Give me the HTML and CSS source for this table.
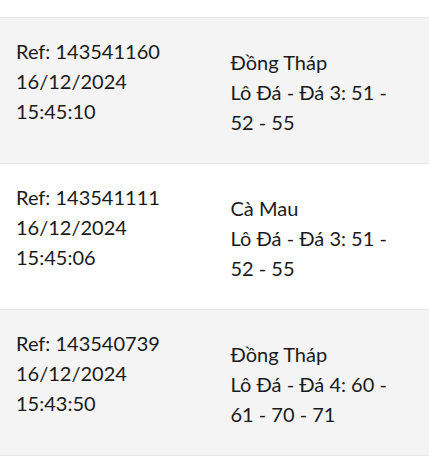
FILE: index.html
```html
<!DOCTYPE html>
<html lang="vi">
<head>
<meta charset="utf-8">
<link rel="stylesheet" href="styles.css">
</head>
<body>
<div class="list">
  <div class="row">
    <div class="col col-left">
      <div>Ref: 143541160</div>
      <div>16/12/2024</div>
      <div>15:45:10</div>
    </div>
    <div class="col col-right">
      <div>Đồng Tháp</div>
      <div>Lô Đá - Đá 3: 51 - 52 - 55</div>
    </div>
  </div>
  <div class="row">
    <div class="col col-left">
      <div>Ref: 143541111</div>
      <div>16/12/2024</div>
      <div>15:45:06</div>
    </div>
    <div class="col col-right">
      <div>Cà Mau</div>
      <div>Lô Đá - Đá 3: 51 - 52 - 55</div>
    </div>
  </div>
  <div class="row">
    <div class="col col-left">
      <div>Ref: 143540739</div>
      <div>16/12/2024</div>
      <div>15:43:50</div>
    </div>
    <div class="col col-right">
      <div>Đồng Tháp</div>
      <div>Lô Đá - Đá 4: 60 - 61 - 70 - 71</div>
    </div>
  </div>
</div>
</body>
</html>
```
FILE: styles.css
```css
html, body {
  margin: 0;
  padding: 0;
  background: #ffffff;
}
body {
  font-family: Lato, "Noto Sans", sans-serif;
  font-size: 20px;
  line-height: 30px;
  color: #1a1a1a;
}
.list {
  padding-top: 17px;
}
.row {
  display: grid;
  grid-template-columns: 1fr 1fr;
  padding: 18px 16px 26px;
  border-top: 1px solid #e6e6e6;
  height: 101px;
}
.row:nth-child(odd) {
  background: #f4f4f4;
}
.row:last-child {
  border-bottom: 1px solid #e6e6e6;
}
.col-right {
  padding-left: 16px;
  padding-top: 11px;
}
```
